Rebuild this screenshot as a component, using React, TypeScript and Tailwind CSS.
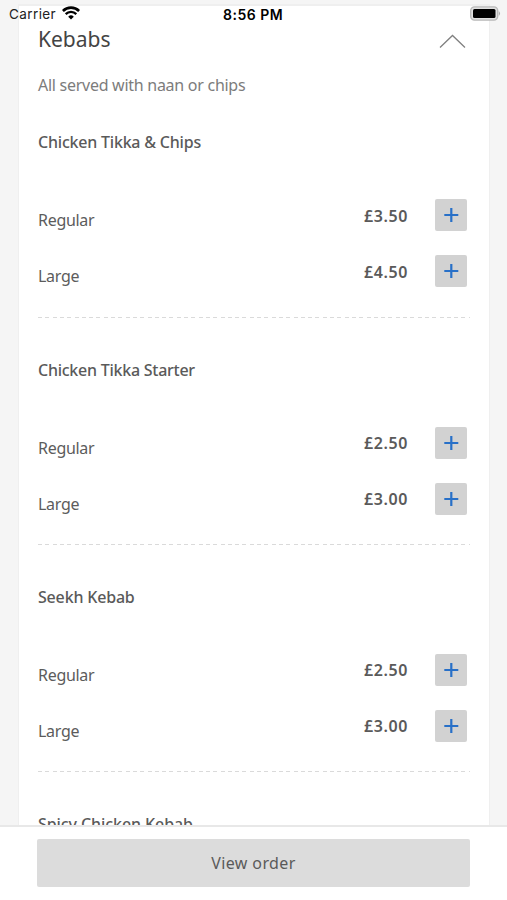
const dishes = [
    { name: 'Chicken Tikka & Chips', nameStyle: 'tracking-[-0.21px]', sizes: [['Regular', '£3.50'], ['Large', '£4.50']] },
    { name: 'Chicken Tikka Starter', nameStyle: 'tracking-[-0.25px]', sizes: [['Regular', '£2.50'], ['Large', '£3.00']] },
    { name: 'Seekh Kebab', nameStyle: 'tracking-[-0.18px]', sizes: [['Regular', '£2.50'], ['Large', '£3.00']] },
    { name: 'Spicy Chicken Kebab', nameStyle: 'tracking-[-0.08px]', sizes: [] },
]

export default function App() {
    return (
        <div className="relative flex h-[900px] w-[507px] flex-col overflow-hidden bg-[#f5f5f5] font-['Noto_Sans',sans-serif] text-[#5a5a5a]">
            <StatusBar />
            <main className="min-h-0 flex-1 overflow-hidden px-[18px] pt-1">
                <section className="h-[1000px] w-[472px] border border-t-2 border-[#efefef] bg-white px-[19px]">
                    <header className="flex h-[84.4px] flex-col pt-[18px]">
                        <div className="flex h-[30px] items-center justify-between pr-1">
                            <h1 className="text-[21px] leading-[30px] text-[#444]">Kebabs</h1>
                            <svg width="27" height="15" viewBox="0 0 27 15" fill="none" stroke="#808080" strokeWidth="1.3" className="mt-1">
                                <path d="M1 13.5 13.5 1.5 26 13.5" />
                            </svg>
                        </div>
                        <p className="mt-[19px] text-base leading-6 tracking-[-0.27px] whitespace-nowrap text-[#7c7c7c]">All served with naan or chips</p>
                    </header>
                    {dishes.map((dish) => (
                        <Dish key={dish.name} dish={dish} />
                    ))}
                </section>
            </main>
            <footer className="h-[75px] shrink-0 border-t-2 border-[#e8e8e8] bg-white px-[37px] pt-3">
                <button className="block h-12 w-[433px] rounded-[2px] bg-[#dcdcdc] text-base tracking-[0.4px]">View order</button>
            </footer>
        </div>
    )
}

function Dish({ dish }: { dish: any }) {
    return (
        <article className="flex h-[227.25px] flex-col pt-10">
            <h2 className={`h-6 text-base leading-6 font-medium whitespace-nowrap ${dish.nameStyle}`}>{dish.name}</h2>
            <div className="mt-[45px] flex flex-col gap-6">
                {dish.sizes.map(([size, price]: string[]) => (
                    <div key={size} className="flex h-8 items-center pr-[3px]">
                        <span className="mt-[10px] flex-1 text-base leading-6 tracking-[-0.3px] text-[#5c5c5c]">{size}</span>
                        <span className="mt-px mr-[27px] text-base leading-6 font-semibold tracking-[0.6px]">{price}</span>
                        <button className="flex size-8 items-center justify-center rounded-[2px] bg-[#d2d2d2]">
                            <svg width="16" height="16" viewBox="0 0 16 16" stroke="#2870c8" strokeWidth="2.2">
                                <path d="M8.3 1v14M1.3 8h14" />
                            </svg>
                        </button>
                    </div>
                ))}
            </div>
            {dish.sizes.length > 0 && (
                <div className="mt-[29.2px] h-px bg-[repeating-linear-gradient(90deg,#dadada_0_4px,transparent_4px_7.3px)]" />
            )}
        </article>
    )
}

function StatusBar() {
    return (
        <div className="absolute inset-x-0 top-0 flex h-7 items-center font-['Inter',sans-serif] text-black">
            <span className="ml-[9px] w-[53px] text-[13.5px] tracking-[0.4px] text-[#222]">Carrier</span>
            <svg width="18" height="14" viewBox="0 0 18 14" className="-mt-[2px]">
                <path d="M.9 5a11.5 11.5 0 0 1 16.2 0" fill="none" stroke="#000" strokeWidth="2.6" />
                <path d="M3.7 8.1a7.5 7.5 0 0 1 10.6 0" fill="none" stroke="#000" strokeWidth="2.3" />
                <path d="M6.2 10.7a4 4 0 0 1 5.6 0L9 13.5z" />
            </svg>
            <span className="ml-[143px] flex-1 text-[14px] font-semibold tracking-[0.5px]">8:56 PM</span>
            <svg width="31" height="15" viewBox="0 0 31 15" className="-mt-[2px] mr-[6px]">
                <rect x=".7" y=".9" width="27" height="13.2" rx="3.8" fill="#e0e0e0" stroke="#b8b8b8" strokeWidth="1.4" />
                <rect x="3" y="3" width="22.5" height="9" rx="1.5" />
                <path d="M28.8 5q2.4 2.5 0 5z" fill="#aaa" />
            </svg>
        </div>
    )
}
